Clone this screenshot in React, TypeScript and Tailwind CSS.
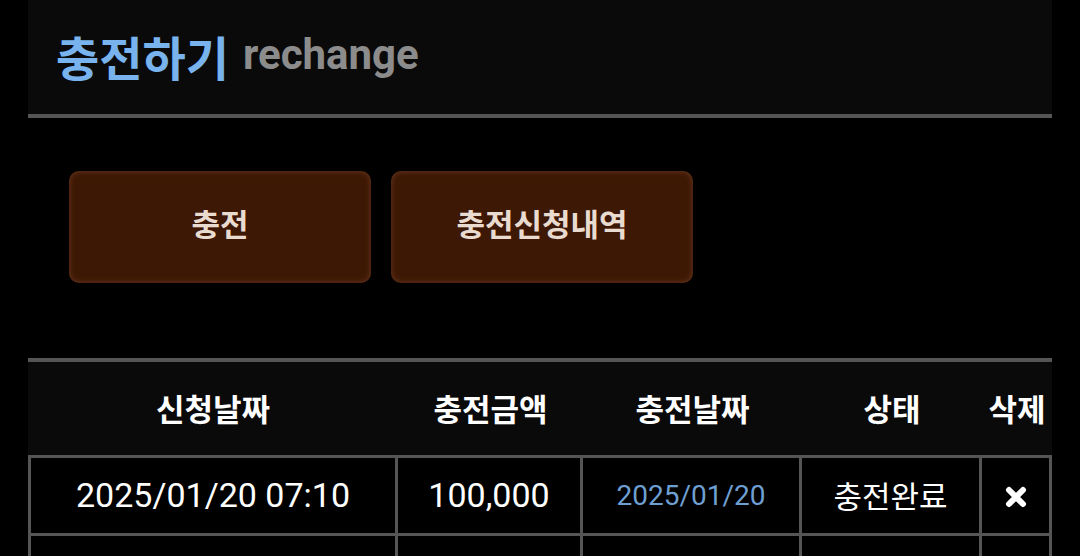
const rows = [
    { applied: '2025/01/20 07:10', amount: '100,000', charged: '2025/01/20', status: '충전완료' },
    { applied: '2025/01/18 21:42', amount: '50,000', charged: '2025/01/18', status: '충전완료' },
]

function CloseIcon() {
    return (
        <svg width="22" height="22" viewBox="0 0 22 22" className="inline-block">
            <path d="M4 4 L18 18 M18 4 L4 18" stroke="#ffffff" strokeWidth="6" strokeLinecap="round" />
        </svg>
    )
}

export default function App() {
    const kr = { fontFamily: '"Noto Sans CJK KR", "Noto Sans", sans-serif' }
    const num = { fontFamily: 'Roboto, "Noto Sans CJK KR", sans-serif' }
    const cell = 'border-b-[3px] border-r-[3px] border-[#555555]'

    return (
        <div className="min-h-[556px] bg-black px-[28px]">
            <div className="h-[118px] bg-[#0a0a0a] flex items-center pl-[28px] pb-[4px] border-b-[4px] border-[#555555]">
                <h1 className="text-[47px] font-bold text-[#78b3ee] leading-none" style={kr}>충전하기</h1>
                <span className="ml-[14px] text-[42px] font-bold text-[#8c8c8c] leading-none" style={num}>rechange</span>
            </div>

            <div className="flex gap-[20px] pl-[41px] pt-[53px]">
                <button className="w-[302px] h-[112px] pb-[8px] rounded-[10px] bg-[#3d1804] shadow-[inset_0_0_6px_#6b3a22] text-[31px] font-bold text-[#eadbd0]" style={kr}>
                    충전
                </button>
                <button className="w-[302px] h-[112px] pb-[8px] rounded-[10px] bg-[#3d1804] shadow-[inset_0_0_6px_#6b3a22] text-[31px] font-bold text-[#eadbd0]" style={kr}>
                    충전신청내역
                </button>
            </div>

            <table className="mt-[75px] w-full table-fixed border-separate border-spacing-0 border-t-[4px] border-[#555555]">
                <colgroup>
                    <col className="w-[370px]" />
                    <col className="w-[185px]" />
                    <col className="w-[219px]" />
                    <col className="w-[180px]" />
                    <col className="w-[70px]" />
                </colgroup>
                <thead>
                    <tr className="h-[93px] bg-[#0a0a0a] text-white text-[31px]" style={kr}>
                        <th className="font-bold">신청날짜</th>
                        <th className="font-bold">충전금액</th>
                        <th className="font-bold">충전날짜</th>
                        <th className="font-bold">상태</th>
                        <th className="font-bold">삭제</th>
                    </tr>
                </thead>
                <tbody>
                    {rows.map((r, i) => {
                        const top = i === 0 ? ' border-t-[3px] h-[81px]' : ' h-[78px]'
                        return (
                            <tr key={r.applied} className="bg-black text-white text-center">
                                <td className={cell + top + ' border-l-[3px] text-[34px]'} style={num}>{r.applied}</td>
                                <td className={cell + top + ' text-[34px]'} style={num}>{r.amount}</td>
                                <td className={cell + top + ' text-[28px] text-[#6e9fd2]'} style={num}>{r.charged}</td>
                                <td className={cell + top + ' text-[31px]'} style={kr}>{r.status}</td>
                                <td className={cell + top}><CloseIcon /></td>
                            </tr>
                        )
                    })}
                </tbody>
            </table>
        </div>
    )
}
